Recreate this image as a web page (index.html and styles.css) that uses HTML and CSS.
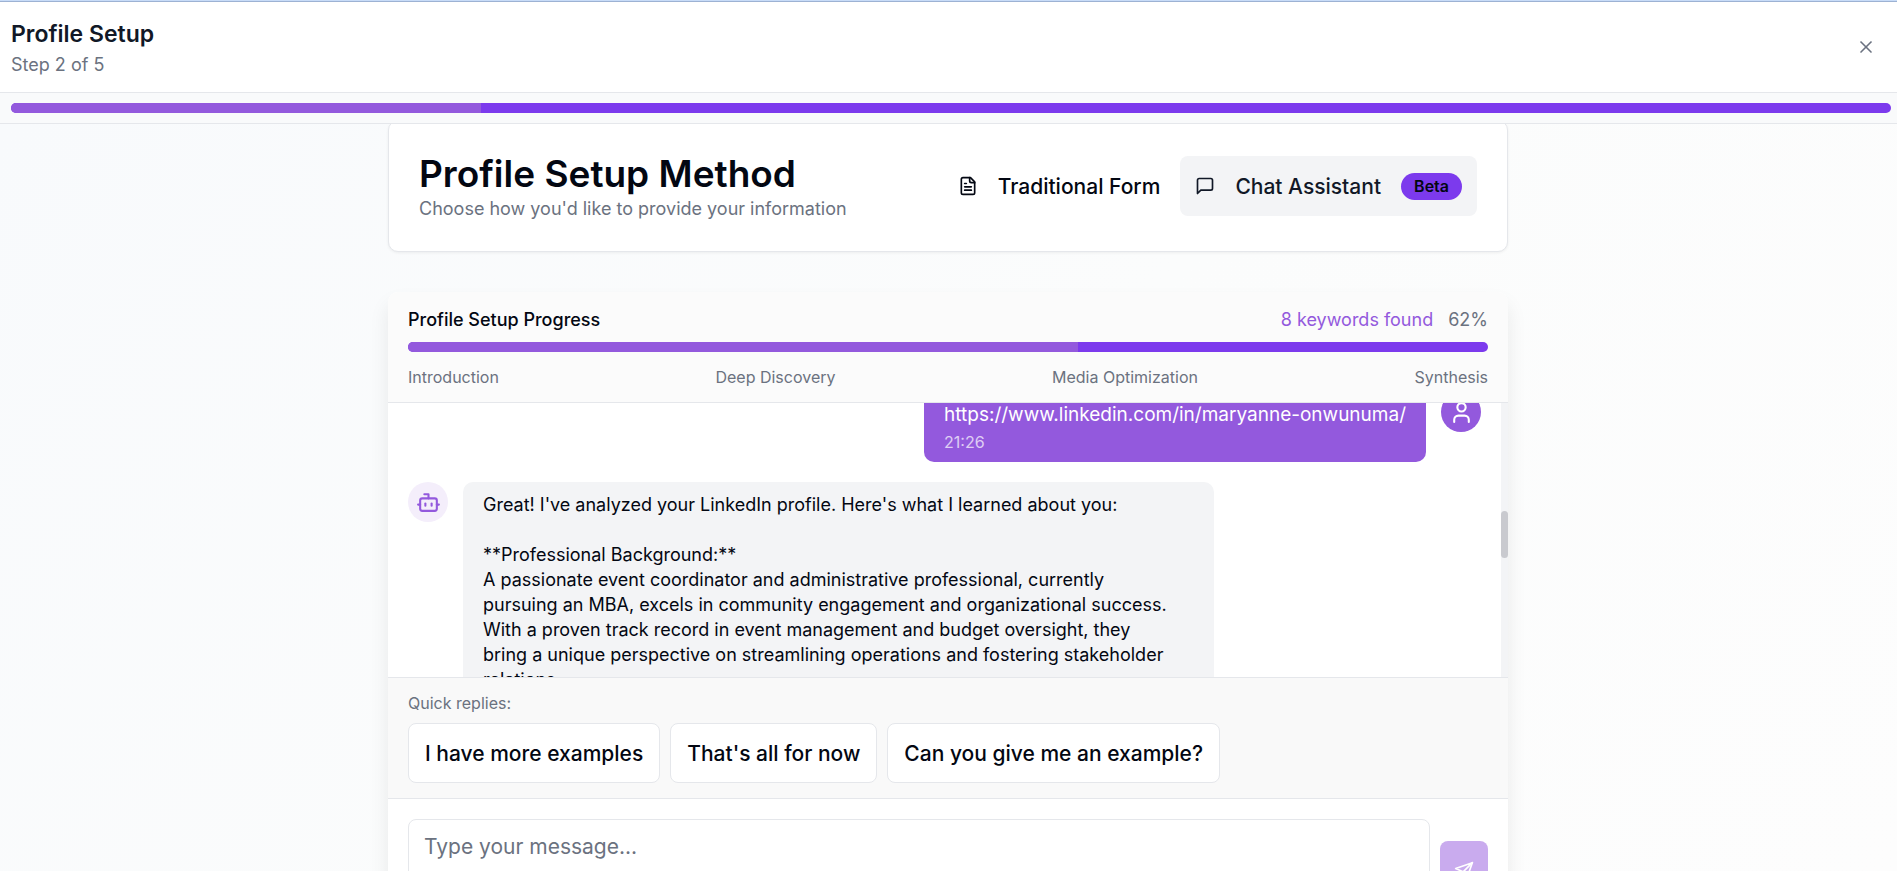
FILE: index.html
```html
<!DOCTYPE html>
<html lang="en">
<head>
<meta charset="utf-8">
<title>Profile Setup</title>
<link rel="stylesheet" href="styles.css">
</head>
<body>
<div class="app">
  <header class="topbar">
    <div>
      <h1 class="topbar-title">Profile Setup</h1>
      <p class="topbar-step">Step 2 of 5</p>
    </div>
    <button class="close" type="button" aria-label="Close">
      <svg class="icon" viewBox="0 0 24 24"><path d="M18 6 6 18"/><path d="m6 6 12 12"/></svg>
    </button>
  </header>
  <div class="step-strip">
    <div class="bar"><div class="bar-fill" style="width:25%"></div></div>
  </div>
  <main class="content">
    <section class="card method">
      <div>
        <h2 class="method-title">Profile Setup Method</h2>
        <p class="muted">Choose how you'd like to provide your information</p>
      </div>
      <div class="method-options">
        <button class="option" type="button">
          <svg class="icon" viewBox="0 0 24 24"><path d="M15 2H6a2 2 0 0 0-2 2v16a2 2 0 0 0 2 2h12a2 2 0 0 0 2-2V7Z"/><path d="M14 2v4a2 2 0 0 0 2 2h4"/><path d="M10 9H8"/><path d="M16 13H8"/><path d="M16 17H8"/></svg>
          Traditional Form
        </button>
        <button class="option option-active" type="button">
          <svg class="icon" viewBox="0 0 24 24"><path d="M21 15a2 2 0 0 1-2 2H7l-4 4V5a2 2 0 0 1 2-2h14a2 2 0 0 1 2 2z"/></svg>
          Chat Assistant
          <span class="badge">Beta</span>
        </button>
      </div>
    </section>

    <section class="chat">
      <div class="chat-head">
        <div class="row">
          <span class="progress-title">Profile Setup Progress</span>
          <span class="stats"><span class="keywords">8 keywords found</span><span class="muted">62%</span></span>
        </div>
        <div class="bar"><div class="bar-fill" style="width:62%"></div></div>
        <div class="row stages">
          <span>Introduction</span><span>Deep Discovery</span><span>Media Optimization</span><span>Synthesis</span>
        </div>
      </div>
      <div class="messages">
        <div class="message-list">
          <div class="message message-user">
            <div class="bubble">
              <p>https://www.linkedin.com/in/maryanne-onwunuma/</p>
              <time class="time">21:26</time>
            </div>
            <div class="avatar">
              <svg class="icon icon-lg" viewBox="0 0 24 24"><path d="M19 21v-2a4 4 0 0 0-4-4H9a4 4 0 0 0-4 4v2"/><circle cx="12" cy="7" r="4"/></svg>
            </div>
          </div>
          <div class="message">
            <div class="avatar">
              <svg class="icon icon-lg" viewBox="0 0 24 24"><path d="M12 8V4H8"/><rect width="16" height="12" x="4" y="8" rx="2"/><path d="M2 14h2"/><path d="M20 14h2"/><path d="M15 13v2"/><path d="M9 13v2"/></svg>
            </div>
            <div class="bubble bubble-reply">
              <p class="reply">Great! I've analyzed your LinkedIn profile. Here's what I learned about you:

**Professional Background:**
A passionate event coordinator and administrative professional, currently
pursuing an MBA, excels in community engagement and organizational success.
With a proven track record in event management and budget oversight, they
bring a unique perspective on streamlining operations and fostering stakeholder
relations.</p>
            </div>
          </div>
        </div>
        <div class="scroll-track"><div class="scroll-thumb"></div></div>
      </div>
      <div class="quick">
        <p class="quick-label">Quick replies:</p>
        <div class="quick-list">
          <button class="quick-reply" type="button">I have more examples</button>
          <button class="quick-reply" type="button">That's all for now</button>
          <button class="quick-reply" type="button">Can you give me an example?</button>
        </div>
      </div>
      <form class="composer">
        <textarea class="composer-input" aria-label="Message" placeholder="Type your message..."></textarea>
        <button class="send" type="button" aria-label="Send" disabled>
          <svg class="icon" viewBox="0 0 24 24"><path d="m22 2-7 20-4-9-9-4Z"/><path d="M22 2 11 13"/></svg>
        </button>
      </form>
    </section>
  </main>
</div>
</body>
</html>
```

FILE: styles.css
```css
* { box-sizing: border-box; }
body, h1, h2, p { margin: 0; }
body {
  font-family: Inter, "Open Sans", sans-serif;
  font-size: 18px;
  line-height: 25px;
  color: #030712;
  background: #fff;
}
button, textarea { font: inherit; color: inherit; }
button { cursor: pointer; }

.icon {
  width: 20px;
  height: 20px;
  flex: none;
  fill: none;
  stroke: currentColor;
  stroke-width: 2;
  stroke-linecap: round;
  stroke-linejoin: round;
}
.icon-lg { width: 25px; height: 25px; }
.muted { color: #6b7280; }

.app {
  height: 100vh;
  display: flex;
  flex-direction: column;
  overflow: hidden;
  border-top: 1px solid #c8dcf8;
}
.topbar {
  flex: none;
  display: flex;
  align-items: center;
  justify-content: space-between;
  padding: 15px 11px;
  background: #fff;
  border-top: 1px solid #9db2d3;
  border-bottom: 1px solid #e5e7eb;
}
.topbar-title { font-size: 23px; line-height: 35px; font-weight: 600; color: #111827; }
.topbar-step { color: #6b7280; }
.close {
  display: flex;
  padding: 10px;
  border: 0;
  background: none;
  color: #6b7280;
}
.step-strip {
  flex: none;
  padding: 10px 6px 10px 11px;
  background: #f9fafb;
  border-bottom: 1px solid #e5e7eb;
}
.bar { height: 10px; border-radius: 5px; background: #7c3aed; overflow: hidden; }
.bar-fill { height: 100%; background: #9359dd; }

.content {
  flex: 1;
  min-height: 0;
  overflow: hidden;
  display: flex;
  flex-direction: column;
  align-items: center;
  gap: 40px;
  padding-right: 1px;
  background: linear-gradient(135deg, #f8fafc, #fbfcfc 50%, #fdfdfd);
}
.card, .chat { flex: none; width: 100%; max-width: 1120px; }
.card {
  margin-top: -4px;
  padding: 30px;
  background: #fff;
  border: 1px solid #e5e7eb;
  border-radius: 10px;
  box-shadow: 0 1px 3px rgba(0, 0, 0, .06);
}
.method { display: flex; align-items: center; justify-content: space-between; }
.method-title {
  font-size: 37px;
  line-height: 45px;
  font-weight: 600;
}
.method-options { display: flex; gap: 5px; }
.option {
  display: flex;
  align-items: center;
  gap: 20px;
  height: 60px;
  padding: 0 15px;
  border: 0;
  border-radius: 8px;
  background: none;
  font-size: 21px;
  font-weight: 500;
}
.option-active { background: #f3f4f6; color: #111827; }
.badge {
  padding: 3px 13px;
  border-radius: 14px;
  background: #7c3aed;
  color: #030712;
  font-size: 16px;
  line-height: 21px;
  font-weight: 600;
}

.chat {
  background: #fff;
  border-radius: 10px;
  box-shadow: 0 12px 20px rgba(0, 0, 0, .08);
}
.chat-head {
  display: flex;
  flex-direction: column;
  gap: 10px;
  padding: 15px 20px;
  background: #fbfbfb;
  border-bottom: 1px solid #e5e7eb;
  border-radius: 10px 10px 0 0;
}
.row { display: flex; justify-content: space-between; }
.progress-title { font-weight: 500; }
.stats { display: flex; gap: 15px; }
.keywords { color: #9359dd; }
.stages { padding-top: 5px; font-size: 16px; line-height: 20px; color: #6b7280; }

.messages { display: flex; height: 274px; overflow: hidden; }
.message-list {
  flex: 1;
  display: flex;
  flex-direction: column;
  gap: 20px;
  margin-top: -11px;
  padding: 0 20px;
}
.message { display: flex; align-items: flex-start; gap: 15px; }
.message-user { justify-content: flex-end; }
.avatar {
  flex: none;
  display: grid;
  place-items: center;
  width: 40px;
  height: 40px;
  border-radius: 50%;
  background: #f4eefb;
  color: #9359dd;
}
.bubble {
  max-width: 70%;
  padding: 10px 20px;
  border-radius: 10px;
  background: #f3f4f6;
  font-size: 19px;
}
.bubble-reply { width: 70%; font-size: 18px; }
.message-user .bubble, .message-user .avatar { background: #9359dd; color: #fff; }
.reply { white-space: pre-line; }
.time { display: block; margin-top: 5px; font-size: 16px; line-height: 20px; opacity: .7; }
.scroll-track { flex: none; width: 7px; background: #f3f4f6; }
.scroll-thumb { height: 47px; margin-top: 108px; border-radius: 4px; background: #c9cacf; }

.quick {
  padding: 15px 20px;
  background: #f9f9f9;
  border-top: 1px solid #e5e7eb;
  border-bottom: 1px solid #e5e7eb;
}
.quick-label { margin-bottom: 10px; font-size: 16px; line-height: 20px; color: #6b7280; }
.quick-list { display: flex; gap: 10px; }
.quick-reply {
  height: 60px;
  padding: 0 16px;
  border: 1px solid #e5e7eb;
  border-radius: 8px;
  background: #fff;
  font-size: 21px;
  font-weight: 500;
}
.composer { display: flex; align-items: flex-end; gap: 10px; padding: 20px; }
.composer-input {
  flex: 1;
  height: 82px;
  padding: 12px 15px;
  border: 1px solid #e5e7eb;
  border-radius: 8px;
  background: #fff;
  font-size: 21px;
  line-height: 30px;
  resize: none;
}
.composer-input::placeholder { color: #6b7280; opacity: 1; }
.send {
  display: grid;
  place-items: center;
  width: 48px;
  height: 60px;
  padding: 0;
  border: 0;
  border-radius: 8px;
  background: #c9abee;
  color: #fff;
}
```
